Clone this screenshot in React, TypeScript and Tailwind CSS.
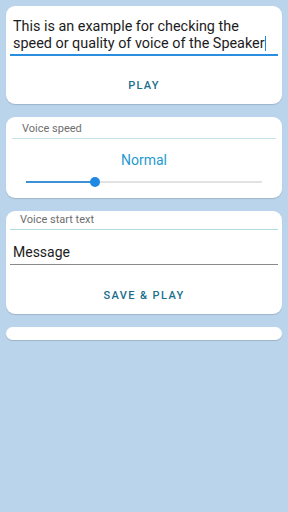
export default function App() {
  return (
    <div className="w-[288px] h-[512px] bg-[#bad4ec] px-[6px] pt-[6px] flex flex-col gap-[13px] font-['Roboto',sans-serif]">
      {/* Sample text card */}
      <div className="bg-white rounded-[9px] h-[98px] shadow-[0_1px_1px_rgba(0,0,0,0.15)] px-[4px] flex flex-col">
        <div className="mt-[12px] px-[3px] pb-[2px] text-[14.4px] leading-[17px] text-[#1c1c1c]">
          This is an example for checking the speed or quality of voice of the Speaker
          <span className="inline-block w-[1.5px] h-[15px] bg-[#1e88e5] align-[-3px]" />
        </div>
        <div className="h-[2px] bg-[#2a8ee0]" />
        <div className="flex-1 flex items-center justify-center pt-[12px]">
          <span className="text-[11px] font-medium tracking-[1.2px] text-[#1a6d8c]">PLAY</span>
        </div>
      </div>

      {/* Voice speed card */}
      <div className="bg-white rounded-[9px] h-[81px] shadow-[0_1px_1px_rgba(0,0,0,0.15)] px-[6px] flex flex-col">
        <div className="mt-[5px] border-b border-[#c5e3e6] pl-[10px] pb-[2px] text-[11px] leading-[14px] text-[#6e6e6e]">
          Voice speed
        </div>
        <div className="mt-[12px] text-center text-[14px] leading-[18px] text-[#1f9ad0]">Normal</div>
        <div className="mt-[8px] mx-[14px] relative h-[10px] flex items-center">
          <div className="h-[2px] w-full bg-[#e2e2e2]" />
          <div className="absolute left-0 h-[2px] w-[69px] bg-[#3f91d6]" />
          <div className="absolute left-[64px] w-[10px] h-[10px] rounded-full bg-[#1e88e5]" />
        </div>
      </div>

      {/* Voice start text card */}
      <div className="bg-white rounded-[9px] h-[103px] shadow-[0_1px_1px_rgba(0,0,0,0.15)] px-[4px] flex flex-col">
        <div className="mt-[2px] border-b border-[#b6dce4] pl-[10px] pb-[2px] text-[11px] leading-[14px] text-[#6e6e6e]">
          Voice start text
        </div>
        <div className="mt-[14px] border-b border-[#8a8a8a] px-[3px] pb-[3px] text-[14px] leading-[17px] text-[#1c1c1c]">
          Message
        </div>
        <div className="flex-1 flex items-center justify-center pt-[14px]">
          <span className="text-[11px] font-medium tracking-[1.4px] text-[#1a6d8c]">SAVE &amp; PLAY</span>
        </div>
      </div>

      {/* Empty card */}
      <div className="bg-white rounded-[7px] h-[13px] shadow-[0_1px_1px_rgba(0,0,0,0.15)]" />
    </div>
  );
}
